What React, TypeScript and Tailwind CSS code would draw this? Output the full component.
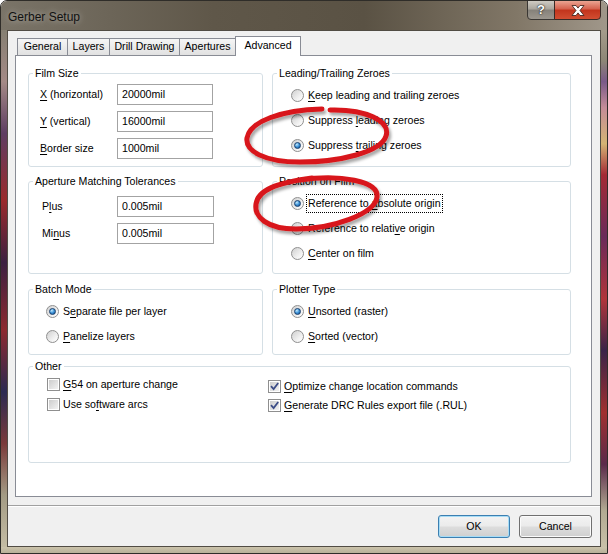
import React from "react";

const U: React.FC<{ children: React.ReactNode }> = ({ children }) => (
  <span className="underline decoration-1 underline-offset-[2px]">{children}</span>
);

function Radio({ checked = false }: { checked?: boolean }) {
  return (
    <span className="flex h-[13px] w-[13px] shrink-0 items-center justify-center rounded-full border border-[#8f8f8f] bg-[linear-gradient(135deg,#cfcfcf,#f2f2f2_65%,#ffffff)]">
      {checked && (
        <span className="h-[7px] w-[7px] rounded-full border border-[#173f6e] bg-[radial-gradient(circle_at_35%_30%,#c2ebff,#3e93d8_50%,#0d4a8c)]" />
      )}
    </span>
  );
}

function CheckBox({ checked = false }: { checked?: boolean }) {
  return (
    <span className="flex h-[13px] w-[13px] shrink-0 items-center justify-center border border-[#8f8f8f] bg-white">
      <span className="flex h-[9px] w-[9px] items-center justify-center bg-[linear-gradient(135deg,#cdcdcd,#f2f2f2)]">
        {checked && (
          <svg width="9" height="9" viewBox="0 0 9 9" className="overflow-visible">
            <path d="M1 4.2 L3.6 7 L8.2 1" fill="none" stroke="#3b4c86" strokeWidth="1.8" />
          </svg>
        )}
      </span>
    </span>
  );
}

function Field({ value, w = "w-[96px]" }: { value: string; w?: string }) {
  return (
    <div className={`h-[21px] ${w} border border-[#a3a3a3] bg-white pl-[4px] leading-[19px]`}>
      {value}
    </div>
  );
}

function Option({
  checked,
  focus,
  children,
}: {
  checked?: boolean;
  focus?: boolean;
  children: React.ReactNode;
}) {
  return (
    <div className="flex h-[15px] items-center gap-[4px]">
      <Radio checked={checked} />
      <span
        className={
          focus ? "outline outline-1 outline-dotted outline-black outline-offset-[1px]" : ""
        }
      >
        {children}
      </span>
    </div>
  );
}

function Tick({ checked, children }: { checked?: boolean; children: React.ReactNode }) {
  return (
    <div className="flex h-[15px] items-center gap-[3px]">
      <CheckBox checked={checked} />
      <span>{children}</span>
    </div>
  );
}

function Group({
  title,
  className = "",
  children,
}: {
  title: string;
  className?: string;
  children: React.ReactNode;
}) {
  return (
    <fieldset className={`min-w-0 rounded-[3px] border border-[#d5dfe5] ${className}`}>
      <legend className="ml-[4px] px-[2px] leading-[13px]">{title}</legend>
      {children}
    </fieldset>
  );
}

function Tab({ label, w, active }: { label: string; w: string; active?: boolean }) {
  if (active) {
    return (
      <div
        className={`relative z-10 -mb-px -ml-px flex h-[20px] ${w} items-center justify-center border border-b-0 border-[#898c95] bg-white pb-[1px]`}
      >
        {label}
      </div>
    );
  }
  return (
    <div
      className={`-ml-px flex h-[17px] ${w} items-center justify-center border border-b-0 border-[#898c95] bg-[linear-gradient(#f5f5f5,#ebebeb_50%,#e1e1e1)] first:ml-0`}
    >
      {label}
    </div>
  );
}

function Button({ label, primary }: { label: string; primary?: boolean }) {
  return (
    <button
      className={`h-[23px] rounded-[3px] border bg-[linear-gradient(#f3f3f3,#ebebeb_48%,#dddddd_52%,#cfcfcf)] leading-[21px] ${
        primary
          ? "w-[72px] border-[#3c7fb1] shadow-[inset_0_0_0_1px_#a6dcf6]"
          : "w-[73px] border-[#707070] shadow-[inset_0_0_0_1px_#fbfbfb]"
      }`}
    >
      {label}
    </button>
  );
}

export default function App() {
  return (
    <div className="relative h-[554px] w-[608px] overflow-hidden rounded-t-[7px] border border-[#2f2d29] bg-[#f0f0f0] font-['Liberation_Sans',Arial,sans-serif] text-[10.6px] text-black">
      {/* Title bar */}
      <div className="flex h-[29px] items-start justify-between bg-[linear-gradient(90deg,#7a7468_0%,#5f5749_35%,#5a5244_60%,#817767_85%,#a0978a_100%)] pl-[7px] pr-[6px]">
        <span className="mt-[7px] text-[12px] text-[#111] [text-shadow:0_0_6px_rgba(255,255,255,0.55)]">
          Gerber Setup
        </span>
        <div className="-mt-px flex">
          <div className="flex h-[20px] w-[28px] items-center justify-center rounded-bl-[4px] border border-[#3a3733] bg-[linear-gradient(#cfcbc3,#a9a59c_45%,#85817a_50%,#9c978e)] text-[13px] font-bold text-white [text-shadow:0_0_2px_#222,0_0_1px_#000]">
            ?
          </div>
          <div className="-ml-px flex h-[20px] w-[47px] items-center justify-center rounded-br-[4px] border border-[#3a2a26] bg-[linear-gradient(#eba492,#d4604c_45%,#c2341c_50%,#d24e32)]">
            <svg width="14" height="11" viewBox="0 0 14 11">
              <path
                d="M1 0.5h4l2 2.6 2-2.6h4l-4 5 4 5h-4l-2-2.6-2 2.6h-4l4-5z"
                fill="#fff"
                stroke="#4a2a22"
                strokeWidth="0.9"
              />
            </svg>
          </div>
        </div>
      </div>

      <div className="flex h-[517px]">
        {/* left frame */}
        <div className="w-[6px] bg-[linear-gradient(180deg,#857f72_0%,#a48a86_10%,#5e3d62_20%,#9a2a2c_33%,#3c2142_45%,#8c2a30_58%,#2c2a52_70%,#7a3a3a_80%,#a39b84_90%,#c4bca4_100%)]" />

        {/* client */}
        <div className="flex w-[594px] flex-col border border-[#514c44] bg-[#f0f0f0]">
          <div className="box-content flex h-[19px] items-end pl-[9px] pt-[5px]">
            <Tab label="General" w="w-[51px]" />
            <Tab label="Layers" w="w-[43px]" />
            <Tab label="Drill Drawing" w="w-[71px]" />
            <Tab label="Apertures" w="w-[57px]" />
            <Tab label="Advanced" w="w-[66px]" active />
          </div>

          <div className="ml-[7px] h-[442px] w-[577px] border border-[#898c95] bg-white pl-[12px] pt-[11px]">
            <div className="grid grid-cols-[235px_299px] gap-x-[9px]">
              <Group title="Film Size" className="h-[100px]">
                <div className="grid grid-cols-[77px_96px] items-center gap-y-[6px] pl-[11px] pt-[4px]">
                  <span>
                    <U>X</U> (horizontal)
                  </span>
                  <Field value="20000mil" />
                  <span>
                    <U>Y</U> (vertical)
                  </span>
                  <Field value="16000mil" />
                  <span>
                    <U>B</U>order size
                  </span>
                  <Field value="1000mil" />
                </div>
              </Group>
              <Group title="Leading/Trailing Zeroes" className="h-[100px]">
                <div className="flex flex-col gap-[10px] pl-[18px] pt-[8px]">
                  <Option>
                    <U>K</U>eep leading and trailing zeroes
                  </Option>
                  <Option>
                    Suppress <U>l</U>eading zeroes
                  </Option>
                  <Option checked>
                    Suppress <U>t</U>railing zeroes
                  </Option>
                </div>
              </Group>
            </div>

            <div className="mt-[8px] grid grid-cols-[235px_299px] gap-x-[9px]">
              <Group title="Aperture Matching Tolerances" className="h-[99px]">
                <div className="grid grid-cols-[75px_97px] items-center gap-y-[6px] pl-[13px] pt-[8px]">
                  <span>
                    P<U>l</U>us
                  </span>
                  <Field value="0.005mil" w="w-[97px]" />
                  <span>
                    Mi<U>n</U>us
                  </span>
                  <Field value="0.005mil" w="w-[97px]" />
                </div>
              </Group>
              <Group title="Position on Film" className="h-[99px]">
                <div className="flex flex-col gap-[10px] pl-[18px] pt-[8px]">
                  <Option checked focus>
                    Reference to <U>a</U>bsolute origin
                  </Option>
                  <Option>
                    Reference to relati<U>v</U>e origin
                  </Option>
                  <Option>
                    <U>C</U>enter on film
                  </Option>
                </div>
              </Group>
            </div>

            <div className="mt-[9px] grid grid-cols-[235px_299px] gap-x-[9px]">
              <Group title="Batch Mode" className="h-[72px]">
                <div className="flex flex-col gap-[10px] pl-[17px] pt-[8px]">
                  <Option checked>
                    S<U>e</U>parate file per layer
                  </Option>
                  <Option>
                    <U>P</U>anelize layers
                  </Option>
                </div>
              </Group>
              <Group title="Plotter Type" className="h-[72px]">
                <div className="flex flex-col gap-[10px] pl-[18px] pt-[8px]">
                  <Option checked>
                    <U>U</U>nsorted (raster)
                  </Option>
                  <Option>
                    <U>S</U>orted (vector)
                  </Option>
                </div>
              </Group>
            </div>

            <Group title="Other" className="mt-[5px] h-[103px] w-[543px]">
              <div className="grid grid-cols-[221px_1fr] items-start pl-[18px]">
                <div className="flex flex-col gap-[5px] pt-[4px]">
                  <Tick>
                    <U>G</U>54 on aperture change
                  </Tick>
                  <Tick>
                    Use so<U>f</U>tware arcs
                  </Tick>
                </div>
                <div className="flex flex-col gap-[4px] pt-[6px]">
                  <Tick checked>
                    <U>O</U>ptimize change location commands
                  </Tick>
                  <Tick checked>
                    <U>G</U>enerate DRC Rules export file (.RUL)
                  </Tick>
                </div>
              </div>
            </Group>
          </div>

          <div className="mt-[8px] h-[2px] border-t border-b border-t-[#a0a0a0] border-b-white" />

          <div className="mt-[8px] flex justify-end gap-[9px] pr-[8px]">
            <Button label="OK" primary />
            <Button label="Cancel" />
          </div>
        </div>

        {/* right frame */}
        <div className="w-[6px] bg-[linear-gradient(180deg,#a59c8b_0%,#8d8676_6%,#7a5a88_10%,#c48c98_15%,#d4b474_22%,#a42a34_28%,#6a2a5a_40%,#b0343a_52%,#3a2448_62%,#a03030_74%,#5a2a4a_84%,#b2aa92_93%,#c8c0a8_100%)]" />
      </div>

      {/* bottom frame */}
      <div className="h-[6px] bg-[linear-gradient(#cbc3ab,#b9b199)]" />

      {/* red annotation rings */}
      <svg
        className="pointer-events-none absolute -left-px -top-px"
        width="608"
        height="554"
        viewBox="0 0 608 554"
      >
        <defs>
          <filter id="ringShadow" x="-20%" y="-20%" width="140%" height="160%">
            <feDropShadow dx="2" dy="3" stdDeviation="1.6" floodColor="#000" floodOpacity="0.35" />
          </filter>
        </defs>
        <g filter="url(#ringShadow)" fill="none" strokeLinecap="round">
          <path
            d="M330 110 C366 109 391 121 386 136 C381 152 340 162 300 162 C264 162 245 151 247 138 C250 121 282 110 322 109"
            stroke="#d8181a"
            strokeWidth="5"
          />
          <path
            d="M300 180 C340 174 379 181 377 197 C375 214 332 229 296 229 C267 229 254 217 256 204 C258 190 276 183 312 178"
            stroke="#d8181a"
            strokeWidth="5"
          />
        </g>
      </svg>
    </div>
  );
}
